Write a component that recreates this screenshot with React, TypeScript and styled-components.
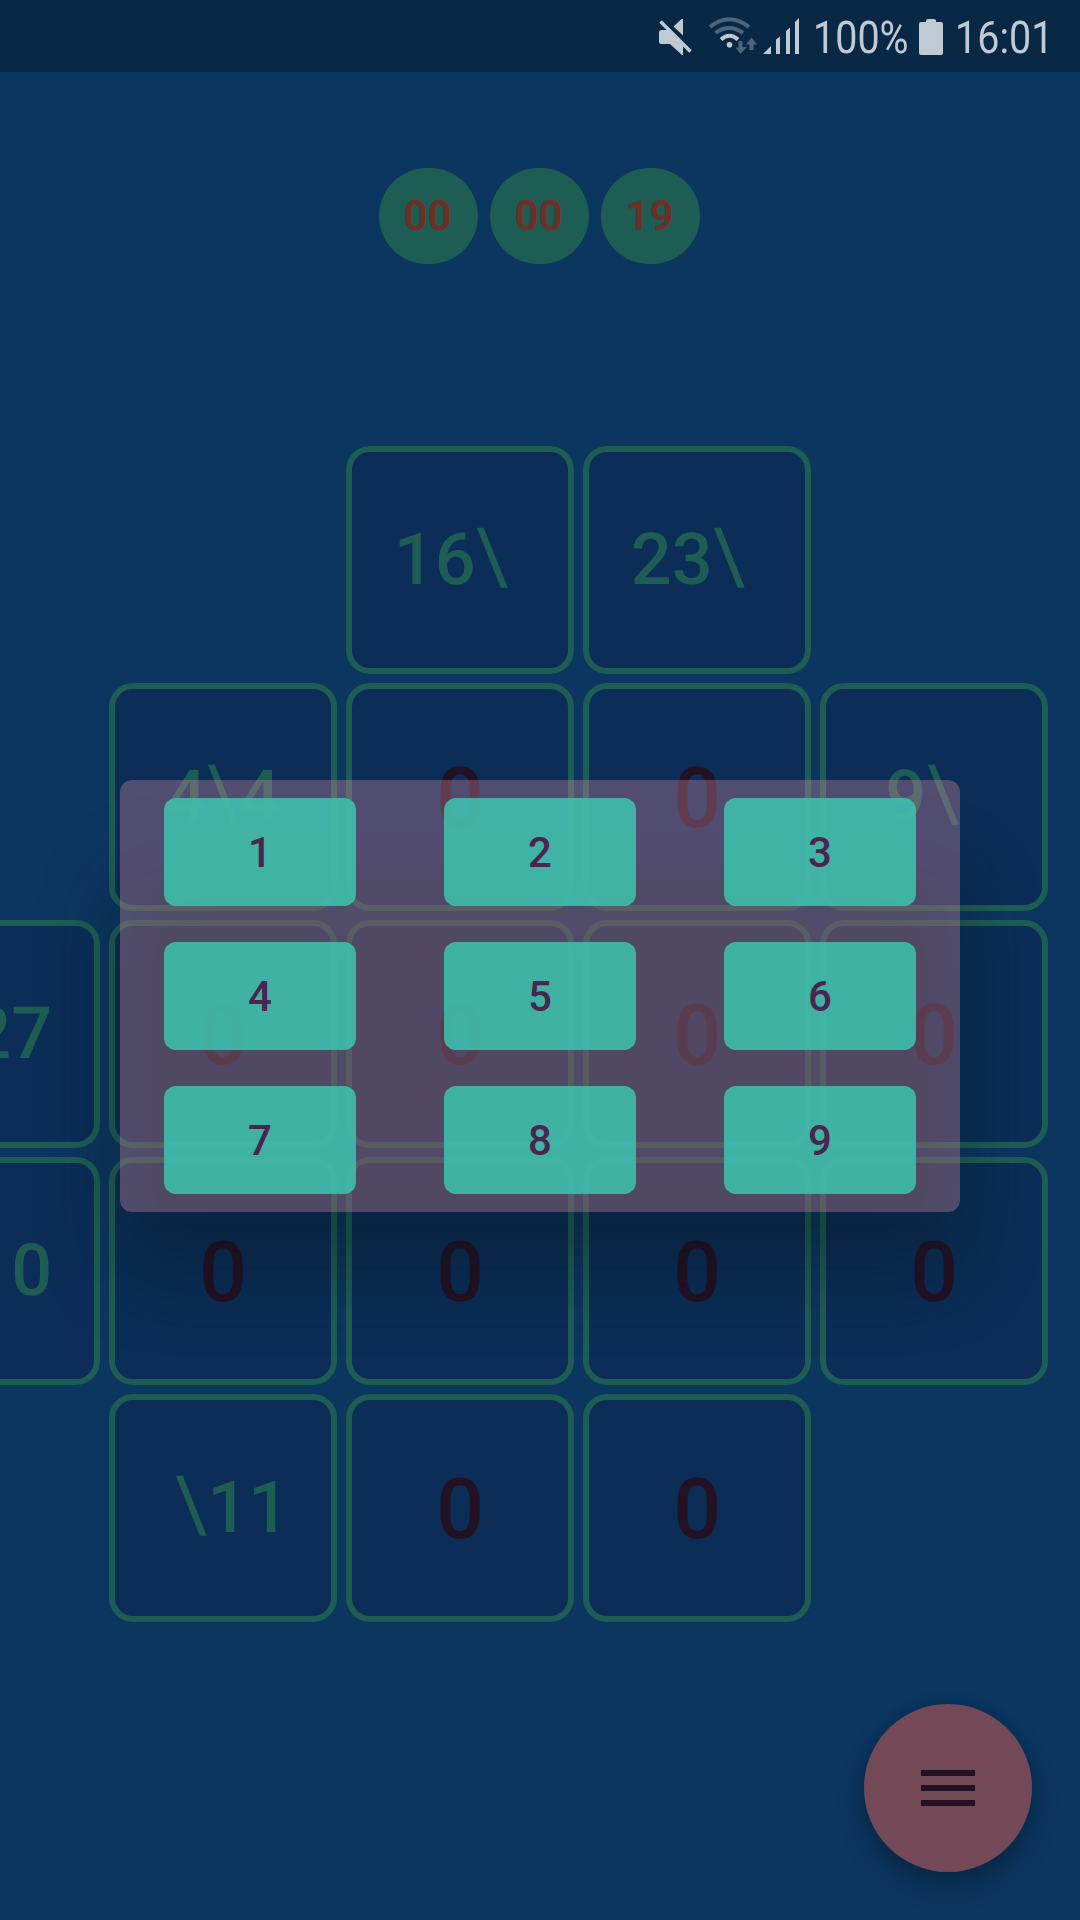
import React from 'react';
import styled, { createGlobalStyle } from 'styled-components';

const GlobalStyle = createGlobalStyle`
  * { box-sizing: border-box; }
  html, body { margin: 0; padding: 0; background: #0b365f; }
`;

const Screen = styled.main`
  position: relative;
  width: 1080px;
  height: 1920px;
  overflow: hidden;
  background: #0b365f;
  font-family: Roboto, 'Liberation Sans', sans-serif;
  text-rendering: geometricPrecision;
`;

const StatusBar = styled.header`
  display: flex;
  align-items: center;
  justify-content: flex-end;
  height: 72px;
  padding-right: 29px;
  background: #082846;
  color: #c1c9d2;
`;

const StatusIcons = styled.svg`
  display: block;
  width: 150px;
  height: 72px;
`;

const StatusLabel = styled.div<{ $width: number; $indent?: number }>`
  width: ${(p) => p.$width}px;
  padding-left: ${(p) => p.$indent ?? 0}px;
  font-size: 45px;
  line-height: 72px;
  white-space: nowrap;
`;

const Condensed = styled.span`
  display: inline-block;
  padding-top: 4px;
  transform: scaleX(0.878);
  transform-origin: left center;
`;

const Battery = styled.svg`
  display: block;
  width: 24px;
  height: 36px;
  margin: 2px 12px 0 15px;
`;

const Timer = styled.section`
  display: flex;
  justify-content: center;
  gap: 12px;
  padding: 96px 1px 0 0;
`;

const TimerUnit = styled.div`
  display: flex;
  align-items: center;
  justify-content: center;
  width: 99px;
  height: 96px;
  padding: 1px 2px 0 0;
  border-radius: 48px;
  background: #1e5d53;
  color: #6b3026;
  font-size: 42px;
  font-weight: 700;
`;

const Board = styled.section`
  display: grid;
  grid-template-columns: repeat(5, 228px);
  grid-auto-rows: 228px;
  gap: 9px;
  margin: 182px 0 0 -128px;
`;

const Tile = styled.div`
  display: flex;
  align-items: center;
  justify-content: center;
  border: 6px solid #1e5d53;
  border-radius: 24px;
  background: #0b2d57;
  font-weight: 500;
  line-height: 1.17;
  white-space: pre;
`;

const ClueTile = styled(Tile)<{ $inset?: number }>`
  padding-right: ${(p) => p.$inset ?? 0}px;
  color: #1e5d53;
  font-size: 72px;
`;

const EntryTile = styled(Tile)`
  padding-top: 4px;
  color: #231124;
  font-size: 84px;
`;

const Slash = styled.span`
  display: inline-block;
  margin: 0 1.5px;
  font-weight: 400;
  transform: translateY(-2.8px) scale(1.12, 1.08);
`;

const Modal = styled.div`
  position: absolute;
  inset: 0;
  display: flex;
  align-items: center;
  justify-content: center;
  padding-top: 72px;
`;

const Keypad = styled.div`
  position: relative;
  display: grid;
  grid-template-columns: repeat(3, 192px);
  grid-auto-rows: 108px;
  column-gap: 88px;
  row-gap: 36px;
  padding: 18px 44px;
  width: 840px;
  height: 432px;
  isolation: isolate;

  &::before {
    content: '';
    position: absolute;
    z-index: -2;
    inset: 94px -4px -62px;
    border-radius: 40px;
    background: rgba(4, 18, 20, 0.33);
    filter: blur(38px);
  }

  &::after {
    content: '';
    position: absolute;
    z-index: -1;
    inset: 0;
    border-radius: 12px;
    background: rgba(200, 133, 160, 0.375);
  }
`;

const Key = styled.button`
  display: flex;
  align-items: center;
  justify-content: center;
  padding: 0;
  border: 0;
  border-radius: 12px;
  background: rgba(62, 192, 174, 0.88);
  color: #4a2550;
  font: 500 42px Roboto, 'Liberation Sans', sans-serif;
`;

const MenuButton = styled.button`
  position: absolute;
  right: 48px;
  bottom: 48px;
  display: flex;
  flex-direction: column;
  align-items: center;
  justify-content: center;
  gap: 9px;
  width: 168px;
  height: 168px;
  padding: 0;
  border: 0;
  border-radius: 50%;
  background: #734958;
  box-shadow: 0 14px 24px rgba(8, 22, 40, 0.38), 0 0 14px rgba(8, 22, 40, 0.1);
`;

const MenuLine = styled.span`
  width: 54px;
  height: 6px;
  background: #231124;
`;

const rows: (string | null)[][] = [
  [null, null, '16\\ ', '23\\ ', null],
  [null, '4\\4', '0', '0', '9\\ '],
  [' \\27', '0', '0', '0', '0'],
  [' \\10', '0', '0', '0', '0'],
  [null, ' \\11', '0', '0', null],
];

const keys = [1, 2, 3, 4, 5, 6, 7, 8, 9];

function Clue({ value }: { value: string }) {
  const [down, across] = value.split('\\');
  const singleDown = down !== ' ' && down.length === 1 && across === ' ';
  return (
    <ClueTile $inset={singleDown ? 6 : 0}>
      <span>
        {down}
        <Slash>{'\\'}</Slash>
        {across}
      </span>
    </ClueTile>
  );
}

export default function App() {
  return (
    <Screen>
      <GlobalStyle />
      <StatusBar>
        <StatusIcons viewBox="650 0 150 72" fill="currentColor">
          <path d="M659 32.5Q659 30 661.5 30H670L683 43V55H682L670 44H661.5Q659 44 659 41.5Z" />
          <path d="M673.5 26.5L681.5 19H683V35.5Z" />
          <path d="M660.5 21.5L690.5 51.5" stroke="currentColor" strokeWidth="3.6" />
          <g fill="none" stroke="currentColor" strokeWidth="4">
            <path d="M710 27Q729 11.5 749 27" opacity=".38" />
            <path d="M715.5 33Q729 23 743 33" opacity=".38" />
            <path d="M721 39.5Q729.5 32 738 39.5" />
          </g>
          <circle cx="729.5" cy="44.7" r="2.8" />
          <path
            d="M738.5 41H742.5V47H747L740.5 54L735.5 47.5H738.5ZM749.5 50H753.5V44.5H757L751.5 37.5L746 44.5H749.5Z"
            opacity=".38"
          />
          <path d="M763 54L771 46V54ZM776 39.5L780 36.5V54H776ZM786 31L790 27.5V54H786ZM795 22L799 18V54H795Z" />
        </StatusIcons>
        <StatusLabel $width={104} $indent={13}>
          <Condensed>100%</Condensed>
        </StatusLabel>
        <Battery viewBox="0 0 24 36" fill="currentColor">
          <path d="M7 2Q7 0 9 0H15Q17 0 17 2V3H22Q24 3 24 5V34Q24 36 22 36H2Q0 36 0 34V5Q0 3 2 3H7Z" />
        </Battery>
        <StatusLabel $width={96}>
          <Condensed>16:01</Condensed>
        </StatusLabel>
      </StatusBar>
      <Timer>
        {['00', '00', '19'].map((value, i) => (
          <TimerUnit key={i}>{value}</TimerUnit>
        ))}
      </Timer>
      <Board>
        {rows.flat().map((value, i) => {
          if (value === null) return <span key={i} />;
          if (value === '0') return <EntryTile key={i}>0</EntryTile>;
          return <Clue key={i} value={value} />;
        })}
      </Board>
      <MenuButton aria-label="Menu">
        <MenuLine />
        <MenuLine />
        <MenuLine />
      </MenuButton>
      <Modal>
        <Keypad>
          {keys.map((n) => (
            <Key key={n}>{n}</Key>
          ))}
        </Keypad>
      </Modal>
    </Screen>
  );
}
